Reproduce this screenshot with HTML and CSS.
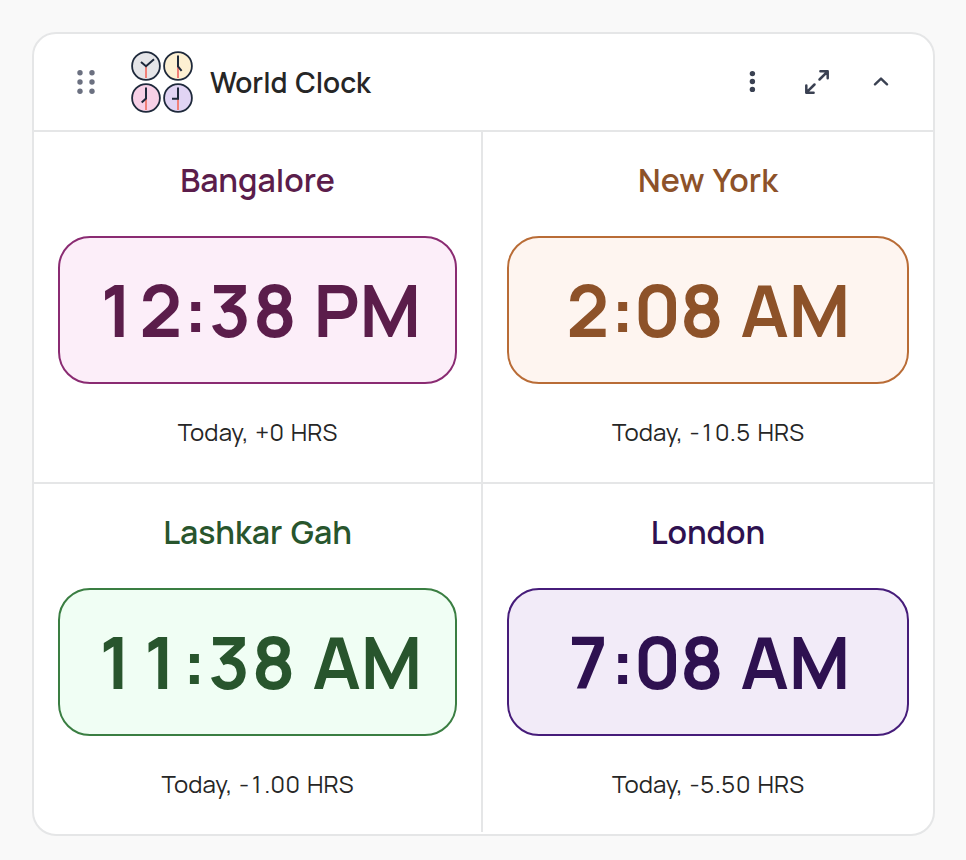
FILE: index.html
```html
<!DOCTYPE html>
<html lang="en">
<head>
<meta charset="utf-8">
<title>World Clock</title>
<link rel="stylesheet" href="styles.css">
</head>
<body>
<main class="card">
  <header class="header">
    <svg class="grip" width="20" height="26" viewBox="0 0 20 26" fill="#6b7080">
      <circle cx="4" cy="3.700" r="2.700"/><circle cx="16" cy="3.700" r="2.700"/>
      <circle cx="4" cy="13" r="2.700"/><circle cx="16" cy="13" r="2.700"/>
      <circle cx="4" cy="22.300" r="2.700"/><circle cx="16" cy="22.300" r="2.700"/>
    </svg>
    <svg class="logo" width="64" height="64" viewBox="0 0 64 64" fill="none" stroke="#1e293b" stroke-width="2">
      <g stroke-width="1.800">
        <circle cx="16" cy="16" r="13.900" fill="#e5e5e8"/>
        <circle cx="48" cy="16" r="13.900" fill="#fdf0d2"/>
        <circle cx="16" cy="48" r="13.900" fill="#f7d0e6"/>
        <circle cx="48" cy="48" r="13.900" fill="#e1d4f4"/>
      </g>
      <path stroke="#f08078" d="M16 16v12M48 16v12M16 48v12M48 48v12"/>
      <path d="M11 12l5 4.300 8-7M48 5.500v11l3.600 4.300M16 37.500v11l-4.300 4M48 37.500v11.200h-6"/>
    </svg>
    <h1 class="title">World Clock</h1>
    <svg class="more" width="8" height="24" viewBox="0 0 8 24" fill="#3a4152">
      <circle cx="4.400" cy="3.600" r="2.700"/><circle cx="4.400" cy="11.500" r="2.700"/><circle cx="4.400" cy="19.400" r="2.700"/>
    </svg>
    <svg class="expand" width="26" height="26" viewBox="0 0 26 26" fill="none" stroke="#3a4152" stroke-width="2.500" stroke-linecap="round" stroke-linejoin="round">
      <path d="M15.500 10.500L23.700 2.300M16.400 2.300H23.700v7M10.500 15.500L2.300 23.700M2.300 16.400v7.300h7.300"/>
    </svg>
    <svg class="chevron" width="16" height="10" viewBox="0 0 16 10" fill="none" stroke="#3a4152" stroke-width="2.400" stroke-linecap="round" stroke-linejoin="round">
      <path d="M2 7.300L8 1.600l6 5.700"/>
    </svg>
  </header>
  <div class="grid">
    <section class="cell plum">
      <h2 class="city">Bangalore</h2>
      <div class="time">12:38 PM</div>
      <p class="offset">Today, +0 HRS</p>
    </section>
    <section class="cell amber">
      <h2 class="city">New York</h2>
      <div class="time">2:08 AM</div>
      <p class="offset">Today, -10.5 HRS</p>
    </section>
    <section class="cell green">
      <h2 class="city">Lashkar Gah</h2>
      <div class="time">11:38 AM</div>
      <p class="offset">Today, -1.00 HRS</p>
    </section>
    <section class="cell violet">
      <h2 class="city">London</h2>
      <div class="time">7:08 AM</div>
      <p class="offset">Today, -5.50 HRS</p>
    </section>
  </div>
</main>
</body>
</html>
```
FILE: styles.css
```css
* { box-sizing: border-box; margin: 0; padding: 0; }
body {
  height: 860px;
  padding: 32px 31px 24px 32px;
  background: #f9f9f9;
  font-family: Manrope, Inter, sans-serif;
  font-feature-settings: "tnum";
  color: #262626;
}
.card {
  height: 804px;
  background: #fff;
  border: 2px solid #e5e6e7;
  border-radius: 24px;
}
.header {
  display: flex;
  align-items: center;
  height: 98px;
  padding: 0 44px 0 42px;
  border-bottom: 2px solid #e5e6e7;
}
.header svg { flex: none; display: block; }
.logo { margin-left: 34px; }
.title {
  margin: 0 auto 0 16px;
  font-size: 28px;
  font-weight: 570;
  line-height: 38px;
  word-spacing: 2px;
  white-space: nowrap;
}
.expand { margin-left: 48px; }
.chevron { margin-left: 43px; }
.grid {
  display: grid;
  grid-template-columns: 449px 450px;
  grid-template-rows: 352px 348px;
}
.cell { display: flex; flex-direction: column; align-items: center; padding: 26px 24px 0; }
.cell:nth-child(odd) { border-right: 2px solid #e5e6e7; }
.cell:nth-child(-n+2) { border-bottom: 2px solid #e5e6e7; }
.city {
  font-size: 32px;
  font-weight: 650;
  line-height: 44px;
  word-spacing: 2px;
  white-space: nowrap;
}
.time {
  width: 100%;
  height: 148px;
  margin: 34px 0 28px;
  padding: 23px 0;
  border: 2px solid;
  border-radius: 32px;
  font-size: 72px;
  font-weight: 670;
  line-height: 98px;
  word-spacing: 2px;
  text-align: center;
  white-space: nowrap;
}
.offset {
  font-size: 24px;
  line-height: 40px;
  letter-spacing: 0.070px;
  word-spacing: 1.800px;
  color: #262626;
  white-space: nowrap;
}
.plum { color: #5b1d4b; }
.plum .time { background: #fceef9; border-color: #8a2b72; }
.amber { color: #8d5229; }
.amber .time { background: #fef5f0; border-color: #b96c36; }
.green { color: #28552d; }
.green .time { background: #f0fef4; border-color: #3a7e42; }
.violet { color: #2e1150; }
.violet .time { background: #f2ebf8; border-color: #461c7a; }
```
